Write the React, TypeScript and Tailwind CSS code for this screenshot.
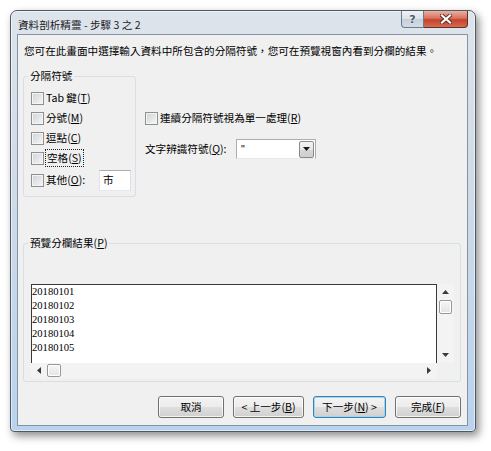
import React from 'react';

const dates = ['20180101', '20180102', '20180103', '20180104', '20180105'];

const U = ({ children }: { children: React.ReactNode }) => (
  <span className="underline underline-offset-[1px] decoration-[1px]">{children}</span>
);

const Check = () => (
  <span className="block w-[13px] h-[13px] shrink-0 border border-[#8e8f8f] bg-[linear-gradient(135deg,#cfd1d4,#f7f7f7)] shadow-[inset_0_0_0_1px_#f4f4f4]" />
);

const Arrow = ({ dir }: { dir: 'up' | 'down' | 'left' | 'right' }) => {
  const pts = {
    up: '0,4 3.5,0 7,4',
    down: '0,0 3.5,4 7,0',
    left: '4,0 0,3.5 4,7',
    right: '0,0 4,3.5 0,7',
  }[dir];
  const vertical = dir === 'up' || dir === 'down';
  return (
    <svg width={vertical ? 7 : 4} height={vertical ? 4 : 7} viewBox={vertical ? '0 0 7 4' : '0 0 4 7'}>
      <polygon points={pts} fill="#3a3a3a" />
    </svg>
  );
};

const Thumb = ({ className }: { className: string }) => (
  <div
    className={
      'rounded-[2px] border border-[#979797] bg-[linear-gradient(to_bottom,#f6f6f6,#e4e4e4)] shadow-[inset_0_0_0_1px_#ffffff] ' +
      className
    }
  />
);

const Button = ({
  children,
  width,
  focused,
}: {
  children: React.ReactNode;
  width: string;
  focused?: boolean;
}) => (
  <div
    className={
      'h-[22px] rounded-[3px] border flex items-center justify-center bg-[linear-gradient(to_bottom,#f3f3f3_0%,#ececec_48%,#dedede_52%,#d0d0d0_100%)] ' +
      (focused
        ? 'border-[#3c7fb1] shadow-[inset_0_0_0_1px_#9fd7f3] '
        : 'border-[#707070] shadow-[inset_0_0_0_1px_rgba(255,255,255,0.75)] ') +
      width
    }
  >
    {children}
  </div>
);

const TitleBar = () => (
  <div className="h-[23px] flex items-start justify-between">
    <div className="pt-[6px] pl-[7px] text-[#1e1e1e]">資料剖析精靈 - 步驟 3 之 2</div>
    <div className="flex mr-[7px]">
      <div className="w-[23px] h-[17px] rounded-bl-[4px] border border-t-0 border-[#707a86] bg-[linear-gradient(to_bottom,#f0f3f6,#d9e0e8_50%,#c4cfdb_51%,#d3dde7)] flex items-center justify-center font-['DejaVu_Sans',sans-serif] text-[11px] font-bold leading-none text-[#505a66] [text-shadow:0_0_2px_#fff]">
        ?
      </div>
      <div className="w-[44px] h-[17px] rounded-br-[4px] border border-t-0 border-l-0 border-[#62302b] bg-[linear-gradient(to_bottom,#eab0a2,#d8725c_45%,#c4432b_55%,#d66a4f)] flex items-center justify-center">
        <svg width="12" height="10" viewBox="0 0 12 10">
          <path d="M2 1.5 L10 8.5 M10 1.5 L2 8.5" stroke="#5b2a24" strokeWidth="4" strokeLinecap="square" />
          <path d="M2 1.5 L10 8.5 M10 1.5 L2 8.5" stroke="#ffffff" strokeWidth="2.2" strokeLinecap="square" />
        </svg>
      </div>
    </div>
  </div>
);

export default function App() {
  return (
    <div className="w-[491px] h-[451px] bg-white pt-[10px] pl-[10px] text-[10.6px] leading-[16px] text-black font-['Noto_Sans_CJK_TC','Noto_Sans',sans-serif]">
      <div className="w-[466px] h-[422px] flex flex-col rounded-t-[7px] rounded-b-[4px] border border-[#4f5863] bg-[linear-gradient(to_bottom,#dde4ec,#d2dce7_35%,#c2d6eb_75%,#b9d3ee)] shadow-[3px_4px_9px_rgba(0,0,0,0.45),inset_0_0_0_1px_rgba(255,255,255,0.55)]">
        <TitleBar />

        {/* client area */}
        <div className="flex-1 ml-[6px] mr-[7px] mb-[5px] border border-[#8594a3] bg-[#f0f0f0] flex flex-col pl-[5px] pr-[6px]">
          <p className="mt-[8px] ml-[1px]">
            您可在此畫面中選擇輸入資料中所包含的分隔符號，您可在預覽視窗內看到分欄的結果。
          </p>

          <div className="flex items-start mt-[9px]">
            <fieldset className="w-[113px] border border-[#d5dfe5] rounded-[3px] pl-[7px] pb-[5px]">
              <legend className="ml-[-3px] px-[2px]">分隔符號</legend>
              <div className="pt-[4px] flex flex-col">
                <div className="flex items-center gap-[2px] h-[20px]">
                  <Check />
                  <span>Tab 鍵(<U>T</U>)</span>
                </div>
                <div className="flex items-center gap-[2px] h-[20px]">
                  <Check />
                  <span>分號(<U>M</U>)</span>
                </div>
                <div className="flex items-center gap-[2px] h-[20px]">
                  <Check />
                  <span>逗點(<U>C</U>)</span>
                </div>
                <div className="flex items-center gap-[2px] h-[20px]">
                  <Check />
                  <span className="outline outline-1 outline-dotted outline-[#222] px-[1px]">
                    空格(<U>S</U>)
                  </span>
                </div>
                <div className="flex items-center gap-[2px] h-[22px] mt-[1px]">
                  <Check />
                  <span className="w-[51px]">其他(<U>O</U>):</span>
                  <div className="w-[32px] h-[21px] border border-[#abadb3] border-l-[#e2e3ea] border-r-[#dbdfe6] border-b-[#e3e9ef] bg-white pl-[3px] flex items-center">
                    市
                  </div>
                </div>
              </div>
            </fieldset>

            <div className="ml-[9px] mt-[40px] flex flex-col">
              <div className="flex items-center gap-[2px] h-[20px]">
                <Check />
                <span>連續分隔符號視為單一處理(<U>R</U>)</span>
              </div>
              <div className="flex items-center mt-[11px] h-[20px]">
                <span className="w-[91px]">文字辨識符號(<U>Q</U>):</span>
                <div className="w-[80px] h-[20px] border border-[#abadb3] border-b-[#e3e9ef] bg-white flex items-center justify-between">
                  <span className="pl-[4px] font-['Liberation_Sans',sans-serif]">"</span>
                  <div className="w-[15px] h-[17px] mr-[1px] rounded-[2px] border border-[#8a8a8a] bg-[linear-gradient(to_bottom,#f4f4f4,#e6e6e6_50%,#d6d6d6_51%,#cfcfcf)] flex items-center justify-center">
                    <svg width="7" height="4" viewBox="0 0 7 4">
                      <polygon points="0,0 7,0 3.5,4" fill="#1a1a1a" />
                    </svg>
                  </div>
                </div>
              </div>
            </div>
          </div>

          <fieldset className="mt-[38px] border border-[#d5dfe5] rounded-[3px] pl-[7px] pb-[3px]">
            <legend className="ml-[-3px] px-[2px]">預覽分欄結果(<U>P</U>)</legend>
            <div className="mt-[33px] grid grid-cols-[406px_17px] grid-rows-[79px_15px]">
              <div className="bg-white border-l border-t border-r border-[#3a3a3a] overflow-hidden font-['Liberation_Serif',serif] text-[10.6px] leading-[14px]">
                {dates.map((d) => (
                  <div key={d}>{d}</div>
                ))}
              </div>
              <div className="bg-[#f3f3f3] flex flex-col items-center">
                <div className="h-[16px] flex items-center justify-center">
                  <Arrow dir="up" />
                </div>
                <Thumb className="w-[13px] h-[14px]" />
                <div className="flex-1" />
                <div className="h-[16px] flex items-center justify-center">
                  <Arrow dir="down" />
                </div>
              </div>
              <div className="bg-[#f3f3f3] flex items-center">
                <div className="w-[16px] flex items-center justify-center">
                  <Arrow dir="left" />
                </div>
                <Thumb className="w-[14px] h-[13px]" />
                <div className="flex-1" />
                <div className="w-[16px] flex items-center justify-center">
                  <Arrow dir="right" />
                </div>
              </div>
              <div className="bg-[#f0f0f0]" />
            </div>
          </fieldset>

          <div className="mt-[14px] flex justify-end gap-[9px]">
            <Button width="w-[66px]">取消</Button>
            <Button width="w-[71px]">
              &lt; 上一步(<U>B</U>)
            </Button>
            <Button width="w-[73px]" focused>
              下一步(<U>N</U>) &gt;
            </Button>
            <Button width="w-[66px]">完成(<U>F</U>)</Button>
          </div>
        </div>
      </div>
    </div>
  );
}
